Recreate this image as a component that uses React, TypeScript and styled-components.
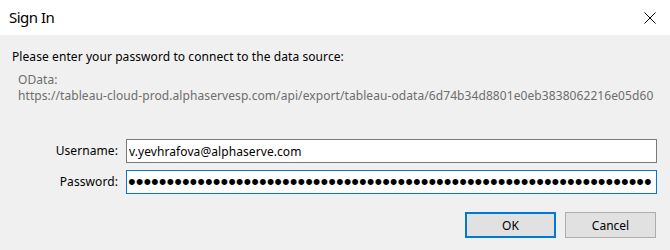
import React from "react";
import styled, { createGlobalStyle } from "styled-components";

const GlobalStyle = createGlobalStyle`
  html, body { margin: 0; padding: 0; background: #f0f0f0; }
  body { font-family: "Noto Sans", "Open Sans", sans-serif; font-size: 12px; color: #000; }
  * { box-sizing: border-box; }
`;

const Window = styled.div`
  width: 670px;
  height: 250px;
  display: flex;
  flex-direction: column;
  background: #f0f0f0;
  overflow: hidden;
`;

const TitleBar = styled.div`
  height: 35px;
  flex: none;
  background: #ffffff;
  display: flex;
  align-items: center;
  justify-content: space-between;
  padding: 0 14px 0 9px;
`;

const Title = styled.div`
  font-size: 15px;
  letter-spacing: -0.5px;
  line-height: 35px;
  color: #000;
`;

const CloseButton = styled.button`
  border: none;
  background: transparent;
  padding: 0;
  width: 12px;
  height: 12px;
  display: flex;
  margin-top: 1px;
`;

const Content = styled.div`
  flex: 1;
  display: flex;
  flex-direction: column;
  padding: 14px 13px 0 12px;
  letter-spacing: 0.08px;
`;

const Intro = styled.div`
  line-height: 16px;
`;

const Source = styled.div`
  margin-top: 7px;
  padding-left: 6px;
  line-height: 16px;
  color: #6d6d6d;
  white-space: nowrap;
`;

const Form = styled.div`
  margin-top: 35px;
  display: grid;
  grid-template-columns: 106px 1fr;
  column-gap: 8px;
  row-gap: 7px;
  align-items: center;
`;

const Label = styled.label`
  text-align: right;
  line-height: 16px;
`;

const TextBox = styled.input<{ $focused?: boolean }>`
  height: 24px;
  width: 100%;
  margin: 0;
  padding: 0 2px;
  border: 1px solid ${(p) => (p.$focused ? "#0078d7" : "#7a7a7a")};
  background: #ffffff;
  font-family: "Noto Sans", "Open Sans", sans-serif;
  font-size: 12px;
  letter-spacing: 0.08px;
  color: #000;
  outline: none;
`;

const PasswordBox = styled(TextBox)`
  font-family: "Liberation Sans", Arial, sans-serif;
  font-size: 22px;
  letter-spacing: 0;
  padding: 0 1px;
  line-height: 22px;
`;

const Buttons = styled.div`
  margin-top: 18px;
  display: flex;
  justify-content: flex-end;
  gap: 9px;
  padding-right: 1px;
`;

const Button = styled.button<{ $default?: boolean }>`
  width: 91px;
  height: 26px;
  margin: 0;
  padding: 0;
  background: #e1e1e1;
  border: ${(p) => (p.$default ? "2px solid #0078d7" : "1px solid #adadad")};
  font-family: "Noto Sans", "Open Sans", sans-serif;
  font-size: 12px;
  color: #000;
`;

const CloseIcon = () => (
  <svg width="12" height="12" viewBox="0 0 12 12">
    <path d="M0.5 0.5 L11.5 11.5 M11.5 0.5 L0.5 11.5" stroke="#000" strokeWidth="1" fill="none" />
  </svg>
);

export default function App() {
  const password = "x".repeat(68);
  return (
    <>
      <GlobalStyle />
      <Window>
        <TitleBar>
          <Title>Sign In</Title>
          <CloseButton aria-label="Close">
            <CloseIcon />
          </CloseButton>
        </TitleBar>
        <Content>
          <Intro>Please enter your password to connect to the data source:</Intro>
          <Source>
            <div>OData:</div>
            <div>https://tableau-cloud-prod.alphaservesp.com/api/export/tableau-odata/6d74b34d8801e0eb3838062216e05d60</div>
          </Source>
          <Form>
            <Label htmlFor="username">Username:</Label>
            <TextBox id="username" type="text" readOnly defaultValue="v.yevhrafova@alphaserve.com" />
            <Label htmlFor="password">Password:</Label>
            <PasswordBox id="password" type="password" readOnly defaultValue={password} $focused />
          </Form>
          <Buttons>
            <Button $default>OK</Button>
            <Button>Cancel</Button>
          </Buttons>
        </Content>
      </Window>
    </>
  );
}
